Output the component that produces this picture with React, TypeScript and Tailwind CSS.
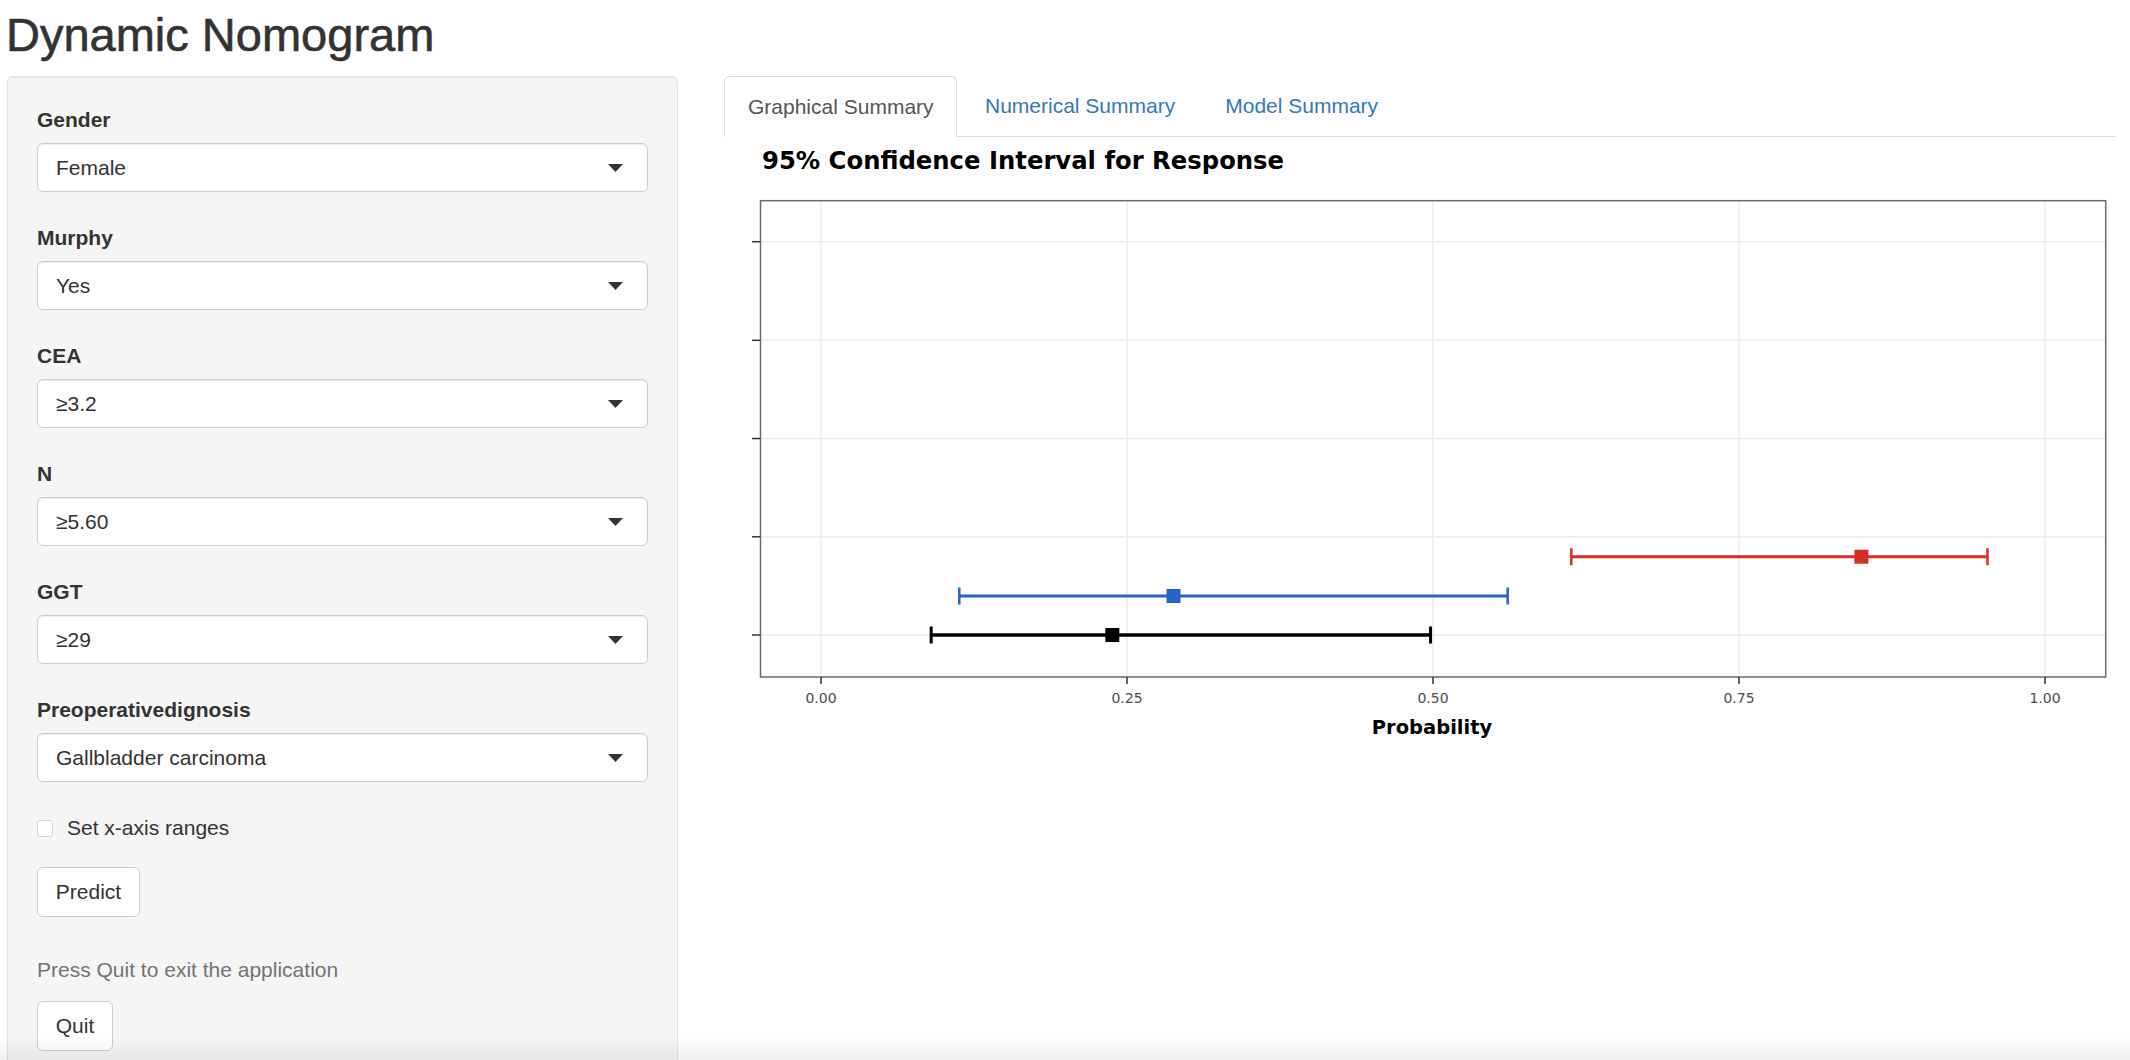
import React from 'react';

const fields = [
  { label: 'Gender', value: 'Female' },
  { label: 'Murphy', value: 'Yes' },
  { label: 'CEA', value: '≥3.2' },
  { label: 'N', value: '≥5.60' },
  { label: 'GGT', value: '≥29' },
  { label: 'Preoperativedignosis', value: 'Gallbladder carcinoma' },
];

// probability -> page x for the plot
const px = (p: number) => 821 + 1224 * p;

const bars = [
  { lo: 0.613, mid: 0.85, hi: 0.953, y: 556.7, color: '#d62f24', w: 3 },
  { lo: 0.113, mid: 0.288, hi: 0.561, y: 596, color: '#2a62cc', w: 3 },
  { lo: 0.09, mid: 0.238, hi: 0.498, y: 635, color: '#000000', w: 3.5 },
];

const gridY = [241.7, 340.3, 438.5, 536.8, 635];
const ticksX = [0, 0.25, 0.5, 0.75, 1];

function SelectBox({ value }: { value: string }) {
  return (
    <div className="h-[49px] w-full bg-white border border-[#cccccc] rounded-[6px] shadow-[inset_0_1px_1px_rgba(0,0,0,0.075)] flex items-center pl-[18px] pr-[24px]">
      <span className="flex-1 text-[21px] text-[#333333]">{value}</span>
      <svg width="15" height="8" viewBox="0 0 15 8">
        <polygon points="0,0 15,0 7.5,8" fill="#333333" />
      </svg>
    </div>
  );
}

function Plot() {
  return (
    <svg width="1392" height="623" viewBox="724 137 1392 623" className="block">
      <text x="762" y="169" fontFamily="'DejaVu Sans', sans-serif" fontWeight="bold" fontSize="24.3" fill="#000">
        95% Confidence Interval for Response
      </text>

      {/* grid */}
      {gridY.map((y) => (
        <line key={'h' + y} x1="761" x2="2105" y1={y} y2={y} stroke="#ebebeb" strokeWidth="1.5" />
      ))}
      {ticksX.map((p) => (
        <line key={'v' + p} x1={px(p)} x2={px(p)} y1="201" y2="677" stroke="#ebebeb" strokeWidth="1.5" />
      ))}

      {/* panel border */}
      <rect x="760.5" y="200.7" width="1345.2" height="476.3" fill="none" stroke="#6b6b6b" strokeWidth="1.5" />

      {/* y ticks */}
      {gridY.map((y) => (
        <line key={'yt' + y} x1="752" x2="760" y1={y} y2={y} stroke="#333" strokeWidth="1.5" />
      ))}

      {/* x ticks + labels */}
      {ticksX.map((p) => (
        <g key={'xt' + p}>
          <line x1={px(p)} x2={px(p)} y1="677" y2="684" stroke="#333" strokeWidth="1.5" />
          <text
            x={px(p)}
            y="703"
            textAnchor="middle"
            fontFamily="'DejaVu Sans', sans-serif"
            fontSize="14"
            fill="#4d4d4d"
          >
            {p.toFixed(2)}
          </text>
        </g>
      ))}
      <text x="1432" y="734" textAnchor="middle" fontFamily="'DejaVu Sans', sans-serif" fontWeight="bold" fontSize="19.5" fill="#000">
        Probability
      </text>

      {/* error bars */}
      {bars.map((b) => (
        <g key={b.color}>
          <line x1={px(b.lo)} x2={px(b.hi)} y1={b.y} y2={b.y} stroke={b.color} strokeWidth={b.w} />
          <line x1={px(b.lo)} x2={px(b.lo)} y1={b.y - 8.5} y2={b.y + 8.5} stroke={b.color} strokeWidth={b.w - 0.5} />
          <line x1={px(b.hi)} x2={px(b.hi)} y1={b.y - 8.5} y2={b.y + 8.5} stroke={b.color} strokeWidth={b.w - 0.5} />
          <rect x={px(b.mid) - 7} y={b.y - 7} width="14" height="14" fill={b.color} />
        </g>
      ))}
    </svg>
  );
}

export default function App() {
  return (
    <div className="relative h-[1060px] w-[2130px] overflow-hidden bg-white text-[#333333] font-['Liberation_Sans',Arial,sans-serif]">
      <h2 className="pl-[6px] pt-[10px] h-[76px] text-[47px] leading-[50px] font-normal text-[#333333] [-webkit-text-stroke:0.6px_#333333]">
        Dynamic Nomogram
      </h2>

      <div className="flex">
        {/* Sidebar */}
        <div className="ml-[7px] w-[671px] h-[1000px] shrink-0 bg-[#f5f5f5] border border-[#e3e3e3] rounded-[6px] shadow-[inset_0_1px_1px_rgba(0,0,0,0.05)] pt-[28px] px-[29px]">
          <div className="flex flex-col gap-[31px]">
            {fields.map((f) => (
              <div key={f.label}>
                <div className="text-[21px] leading-[29px] font-bold mb-[9px]">{f.label}</div>
                <SelectBox value={f.value} />
              </div>
            ))}
          </div>

          <div className="mt-[31px] h-[29px] flex items-center">
            <span className="w-[16px] h-[17px] bg-white border border-[#d4d4d4] rounded-[3px] mt-[2px]" />
            <span className="ml-[14px] text-[21px] leading-[29px]">Set x-axis ranges</span>
          </div>

          <button className="mt-[25px] w-[103px] h-[50px] bg-white border border-[#cccccc] rounded-[6px] text-[21px] text-[#333333] flex items-center justify-center">
            Predict
          </button>

          <div className="mt-[38px] text-[21px] leading-[29px] text-[#737373]">Press Quit to exit the application</div>

          <button className="mt-[17px] w-[76px] h-[50px] bg-white border border-[#cccccc] rounded-[6px] text-[21px] text-[#333333] flex items-center justify-center">
            Quit
          </button>
        </div>

        {/* Main */}
        <div className="ml-[46px] w-[1392px] flex flex-col">
          <div className="h-[61px] flex border-b border-[#dddddd]">
            <div className="w-[233px] h-[61px] -mb-px bg-white border border-b-0 border-[#dddddd] rounded-t-[6px] flex items-center pl-[23px] text-[21px] text-[#555555]">
              Graphical Summary
            </div>
            <div className="ml-[3px] h-[60px] flex items-center px-[25px] text-[21px] text-[#337ab7]">Numerical Summary</div>
            <div className="h-[60px] flex items-center px-[25px] text-[21px] text-[#337ab7]">Model Summary</div>
          </div>
          <Plot />
        </div>
      </div>

      <div className="pointer-events-none absolute bottom-0 left-0 right-0 h-[24px] bg-gradient-to-b from-transparent to-black/[0.06]" />
    </div>
  );
}
